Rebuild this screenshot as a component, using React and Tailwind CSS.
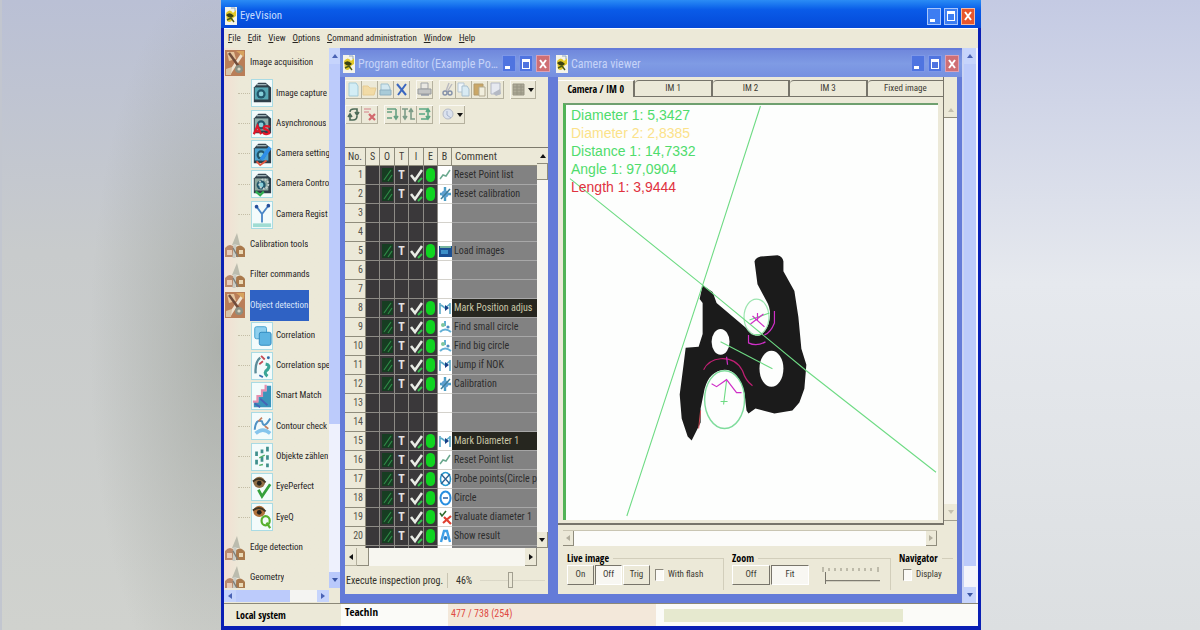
import React from "react";

const NARROW = "font-['Roboto_Condensed','Liberation_Sans',sans-serif]";
const NARROW_BOLD = "font-['Open_Sans_Condensed','Liberation_Sans',sans-serif] font-bold";

/* ---------- shared pieces ---------- */

function EyeLogo() {
  return (
    <svg viewBox="0 0 12 18" className="h-[18px] w-3 shrink-0" preserveAspectRatio="none" aria-hidden="true">
      <rect width="12" height="18" fill="#f4f4ea" />
      <path d="M1 6 Q5 1 8 6 L11 3 V9 L8 11 Q6 17 2 14 Z" fill="#e2c92a" />
      <path d="M1 8 Q5 4 9 9 Q5 13 1 8Z" fill="#3b4313" />
      <path d="M2 13 L6 11 L9 15" stroke="#4c5a18" strokeWidth="1.4" fill="none" />
      <path d="M6 1 L10 1 L10 4" stroke="#8fa7c4" fill="none" />
    </svg>
  );
}

function WindowButtons({ active }) {
  const blue = active ? "bg-[#3d7df2] border-[#a9c6fb]" : "bg-[#4f74e0] border-[#7d97e8]";
  const red = active ? "bg-[#e8562c] border-[#f3b8a0]" : "bg-[#cf6f74] border-[#dba0b4]";
  return (
    <div className="flex shrink-0 gap-[3px]">
      <button aria-label="Minimize" className={`flex h-[17px] w-[14px] items-end justify-start border p-[2px] ${blue}`}>
        <span className="h-[3px] w-[5px] bg-white" />
      </button>
      <button aria-label="Restore" className={`flex h-[17px] w-[14px] items-center justify-center border ${blue}`}>
        <span className="h-[10px] w-2 border border-t-[3px] border-white" />
      </button>
      <button aria-label="Close" className={`flex h-[17px] w-[14px] items-center justify-center border ${red}`}>
        <svg viewBox="0 0 8 10" className="h-[10px] w-2" aria-hidden="true">
          <path d="M1 1 L7 9 M7 1 L1 9" stroke="#fff" strokeWidth="2" />
        </svg>
      </button>
    </div>
  );
}

function Arrow({ dir, color = "#111" }) {
  const d = {
    up: "M0 5 L3 1 L6 5Z",
    down: "M0 1 L3 5 L6 1Z",
    left: "M5 0 L1 3 L5 6Z",
    right: "M1 0 L5 3 L1 6Z",
  }[dir];
  return (
    <svg viewBox="0 0 6 6" className="size-[6px]" aria-hidden="true">
      <path d={d} fill={color} />
    </svg>
  );
}

function ChildWindow({ title, className, children }) {
  return (
    <section className={`flex min-w-0 flex-col border-t-2 border-b-[9px] border-[#647bd8] ${className}`}>
      <header className="flex h-[27px] shrink-0 items-center gap-[3px] bg-linear-to-b from-[#7088dc] via-[#7f9be4] to-[#7690e0] pr-[3px] pl-[3px]">
        <EyeLogo />
        <h2 className={`min-w-0 flex-1 overflow-hidden text-[12px] text-ellipsis whitespace-nowrap text-[#c6d3f8] ${NARROW}`}>{title}</h2>
        <WindowButtons />
      </header>
      <div className="flex min-h-0 flex-1 flex-col border-x-[5px] border-[#647bd8] bg-[#ece9d8]">{children}</div>
    </section>
  );
}

/* ---------- command tree ---------- */

function ToolsIcon({ open }) {
  return (
    <svg viewBox="0 0 20 28" className="h-7 w-5 shrink-0" preserveAspectRatio="none" aria-hidden="true">
      {open ? (
        <>
          <rect x="0" y="1" width="20" height="26" fill="#b97e58" />
          <path d="M2 3 L9 3 L11 10 L4 12Z" fill="#e6c59d" />
          <path d="M18 4 L4 25" stroke="#efe3cf" strokeWidth="3" />
          <path d="M4 4 L17 22" stroke="#6f4c3b" strokeWidth="2.5" />
          <circle cx="14" cy="20" r="4" fill="#8c9183" />
          <circle cx="14" cy="20" r="1.6" fill="#d8d6c4" />
          <path d="M1 20 L7 18 L6 26 L1 26Z" fill="#d9c3a5" />
          <path d="M11 2 L19 2 L19 8Z" fill="#d7a35e" />
        </>
      ) : (
        <>
          <path d="M7 14 L12 2 L15 14Z" fill="#bcbcae" />
          <path d="M0 17 Q5 11 10 17 L10 26 L0 26Z" fill="#b98a6c" />
          <path d="M11 16 Q16 12 20 18 L20 26 L11 26Z" fill="#a9794c" />
          <rect x="2" y="19" width="5" height="5" fill="#e8cbb4" />
          <rect x="14" y="19" width="4" height="4" fill="#ead9b6" />
          <path d="M10 13 L9 27" stroke="#c9ccc5" strokeWidth="3" />
          <path d="M8 17 L13 26" stroke="#7e7f7a" strokeWidth="1.4" />
        </>
      )}
    </svg>
  );
}

function Camera({ tint }) {
  return (
    <>
      <path d="M2 8 L7 3 L15 3 L21 8 V24 H2Z" fill="#2e3f49" />
      <rect x="3" y="8" width="15" height="13" fill={tint} />
      <circle cx="10" cy="15" r="5" fill="#22566b" />
      <circle cx="10" cy="15" r="2.6" fill="#86cfda" />
      <path d="M5 5 H16" stroke="#9fb3b8" strokeWidth="1.5" />
    </>
  );
}

const LEAF_ART = {
  capture: <Camera tint="#56a7b4" />,
  async: (
    <>
      <Camera tint="#8fb0ad" />
      <path d="M2 25 L6 16 L10 25 M4 22 H9" stroke="#e0182a" strokeWidth="2.4" fill="none" />
      <path d="M20 17 Q12 15 13 19 Q20 21 19 24 Q14 26 12 23" stroke="#e0182a" strokeWidth="2.4" fill="none" />
    </>
  ),
  settings: (
    <>
      <Camera tint="#4fa4cf" />
      <path d="M20 7 L10 20" stroke="#2f8fe8" strokeWidth="4" />
      <path d="M5 22 L9 26 L16 21" stroke="#e4573f" strokeWidth="2" fill="none" />
    </>
  ),
  control: (
    <>
      <Camera tint="#8ca79f" />
      <circle cx="13" cy="14" r="5" fill="none" stroke="#c5cfd0" strokeWidth="2" strokeDasharray="2 1.4" />
      <path d="M4 22 L9 26 L13 22" stroke="#2fae53" strokeWidth="2.4" fill="none" />
    </>
  ),
  register: (
    <>
      <path d="M5 5 L11 13 L18 4 M11 13 V22" stroke="#4a86c7" strokeWidth="2" fill="none" />
      <circle cx="5" cy="5" r="2" fill="#25509b" />
      <circle cx="18" cy="4" r="2" fill="#25509b" />
      <rect x="1" y="23" width="20" height="4" fill="#9fdcd3" />
    </>
  ),
  correlation: (
    <>
      <rect x="3" y="4" width="13" height="13" rx="2" fill="#8fd0ee" stroke="#3f9fce" />
      <rect x="8" y="10" width="13" height="14" rx="2" fill="#5db4e2" stroke="#2e87bb" />
    </>
  ),
  special: (
    <>
      <path d="M4 22 Q3 10 9 5" stroke="#5b8d9a" strokeWidth="2.6" fill="none" />
      <path d="M10 3 L14 7 M8 12 L12 9" stroke="#c64b55" strokeWidth="2" />
      <path d="M15 12 Q21 13 17 18 Q12 21 17 25" stroke="#3aa596" strokeWidth="3.4" fill="none" />
      <circle cx="18" cy="5" r="1.6" fill="#2e6ca8" />
      <path d="M8 24 L12 26" stroke="#3a6fb0" strokeWidth="2" />
    </>
  ),
  smart: (
    <>
      <path d="M2 26 V20 H7 V14 H12 V9 H16 V3 H21 V26Z" fill="#3a94bb" />
      <path d="M1 20 H6 V14 H11 V8 H15 V2" stroke="#e58fb0" strokeWidth="2.4" fill="none" />
      <path d="M3 22 L9 26 M9 17 L17 24" stroke="#4564b5" strokeWidth="2" />
    </>
  ),
  contour: (
    <>
      <path d="M3 18 Q4 6 11 9 Q13 18 20 6" stroke="#4f93c5" strokeWidth="2.2" fill="none" />
      <path d="M4 22 Q12 15 20 22" stroke="#86c5ec" strokeWidth="4" fill="none" />
      <path d="M7 9 L11 5 M14 14 L18 17" stroke="#c28162" strokeWidth="1.8" />
    </>
  ),
  count: (
    <>
      <path d="M5 8 V13 M5 17 V22 M11 6 V10 M11 14 V19 M17 3 V8 M17 12 V17 M17 21 V25" stroke="#3f8f8c" strokeWidth="3" />
      <path d="M8 15 L14 12 M8 23 L12 22" stroke="#4fae67" strokeWidth="1.6" />
    </>
  ),
  perfect: (
    <>
      <ellipse cx="8" cy="9" rx="6.5" ry="6" fill="#8e6d45" />
      <path d="M1 8 Q8 2 15 9" stroke="#3e3626" strokeWidth="2" fill="none" />
      <circle cx="8" cy="10" r="2.6" fill="#24221e" />
      <path d="M7 17 L11 24 L20 11" stroke="#35a03b" strokeWidth="3" fill="none" />
    </>
  ),
  eyeq: (
    <>
      <ellipse cx="8" cy="8" rx="6.5" ry="6" fill="#b0713c" />
      <path d="M1 7 Q8 1 15 8" stroke="#3e3626" strokeWidth="2" fill="none" />
      <circle cx="8" cy="9" r="2.6" fill="#24221e" />
      <ellipse cx="15" cy="18" rx="4.5" ry="5" fill="none" stroke="#58b02e" strokeWidth="2.4" />
      <path d="M16 20 L20 26" stroke="#58b02e" strokeWidth="2.4" />
    </>
  ),
};

const TREE = [
  { label: "Image acquisition", group: true, open: true },
  { label: "Image capture", art: "capture" },
  { label: "Asynchronous", art: "async" },
  { label: "Camera setting", art: "settings" },
  { label: "Camera Contro", art: "control" },
  { label: "Camera Regist", art: "register" },
  { label: "Calibration tools", group: true },
  { label: "Filter commands", group: true },
  { label: "Object detection", group: true, open: true, selected: true },
  { label: "Correlation", art: "correlation" },
  { label: "Correlation spe", art: "special" },
  { label: "Smart Match", art: "smart" },
  { label: "Contour check", art: "contour" },
  { label: "Objekte zählen", art: "count" },
  { label: "EyePerfect", art: "perfect" },
  { label: "EyeQ", art: "eyeq" },
  { label: "Edge detection", group: true },
  { label: "Geometry", group: true },
];

function TreeItem({ item }) {
  if (item.group) {
    return (
      <li className="flex min-w-0 items-center gap-[5px]">
        <ToolsIcon open={item.open} />
        <button
          className={
            item.selected
              ? "h-full overflow-hidden bg-[#2f62c4] pr-px whitespace-nowrap text-[#dbe6fa]"
              : "overflow-hidden whitespace-nowrap"
          }
        >
          {item.label}
        </button>
      </li>
    );
  }
  return (
    <li className="flex min-w-0 items-center">
      <span className="ml-[13px] h-px w-3 shrink-0 border-t border-dotted border-[#c3bda6]" />
      <svg viewBox="0 0 22 28" className="mr-[3px] ml-px h-7 w-[22px] shrink-0 border border-[#a9dbe4] bg-[#f3fbfb]" preserveAspectRatio="none" aria-hidden="true">
        {LEAF_ART[item.art]}
      </svg>
      <button className="min-w-0 overflow-hidden whitespace-nowrap">{item.label}</button>
    </li>
  );
}

function Sidebar() {
  return (
    <nav aria-label="Commands" className="flex w-[116px] shrink-0 flex-col bg-[#ece9d8]">
      <div className="flex min-h-0 flex-1">
        <div className="flex min-w-0 flex-1 overflow-hidden bg-linear-to-r from-[#f2dfd2] via-[#ece9d8] via-15% to-[#ece9d8] pl-px">
          <ul className={`-mb-[5px] grid min-w-0 flex-1 auto-rows-fr text-[9px] text-[#26241f] ${NARROW}`}>
            {TREE.map((item) => (
              <TreeItem key={item.label} item={item} />
            ))}
          </ul>
        </div>
        <div className="flex w-[11px] shrink-0 flex-col items-center bg-[#eef1fd]">
          <button aria-label="Scroll up" className="flex h-4 w-full items-center justify-center bg-[#c6d4fc]">
            <Arrow dir="up" color="#4a63b5" />
          </button>
          <div className="w-full basis-[360px] bg-[#bccbfb]" />
          <div className="flex-1" />
          <button aria-label="Scroll down" className="flex h-4 w-full items-center justify-center bg-[#b9c9fb]">
            <Arrow dir="down" color="#3a55a5" />
          </button>
        </div>
      </div>
      <div className="flex h-[15px] shrink-0 items-center pr-[11px]">
        <button aria-label="Scroll left" className="flex h-3 w-3 items-center justify-center bg-[#c6d4fc]">
          <Arrow dir="left" color="#4a63b5" />
        </button>
        <div className="h-3 w-[54px] bg-[#bccbfb]" />
        <div className="h-3 flex-1 bg-[#f4f4f2]" />
        <button aria-label="Scroll right" className="flex h-3 w-3 items-center justify-center bg-[#c6d4fc]">
          <Arrow dir="right" color="#4a63b5" />
        </button>
      </div>
    </nav>
  );
}

/* ---------- program editor ---------- */

const TOOL_ART = {
  New: <path d="M3 2 H10 L12 5 V15 H3Z" fill="#d3edf5" stroke="#a3cbd8" />,
  Open: <path d="M1 5 H6 L8 7 H14 L12 14 H1Z" fill="#f2dba6" stroke="#e6cc94" />,
  Save: (
    <>
      <path d="M3 3 H10 L12 7 V10 H3Z" fill="#d3e8f0" stroke="#9fbfcd" />
      <path d="M2 9 H13 V14 H2Z" fill="#a9cbd8" stroke="#8fb1c2" />
    </>
  ),
  Delete: <path d="M3 3 L12 14 M12 3 L4 14" stroke="#3b67c0" strokeWidth="2" />,
  Print: (
    <>
      <path d="M4 2 H11 V8 H4Z" fill="#e9e8e2" stroke="#a0a3a6" />
      <path d="M1 8 H14 V13 H1Z" fill="#c3c4c4" stroke="#989b9d" />
      <path d="M4 14 H12" stroke="#6e7a93" />
    </>
  ),
  Cut: (
    <>
      <path d="M9 2 L6 10 M12 3 L7 11" stroke="#b9b9bf" strokeWidth="1.4" />
      <circle cx="5" cy="12" r="2" fill="none" stroke="#8490a9" strokeWidth="1.4" />
      <circle cx="10" cy="12" r="2" fill="none" stroke="#8490a9" strokeWidth="1.4" />
    </>
  ),
  Copy: (
    <>
      <path d="M2 2 H8 V11 H2Z" fill="#eef5fa" stroke="#b5c6d3" />
      <path d="M6 5 H11 L13 8 V15 H6Z" fill="#d8eaf3" stroke="#a9c0cf" />
    </>
  ),
  Paste: (
    <>
      <path d="M2 3 H11 V14 H2Z" fill="#caa767" stroke="#b39a6a" />
      <path d="M7 6 H13 V15 H7Z" fill="#f1eedd" stroke="#b3ab92" />
    </>
  ),
  Properties: (
    <>
      <path d="M3 2 H12 V13 H3Z" fill="#e6e9f0" stroke="#b3b8c5" />
      <path d="M5 12 L12 8 L13 13 L8 15Z" fill="#b4b9c4" />
    </>
  ),
  Columns: <path d="M2 3 H13 V14 H2Z M2 6 H13 M2 9 H13 M2 12 H13 M6 3 V14 M10 3 V14" fill="#aeab99" stroke="#979483" />,
  Restart: <path d="M4 6 Q4 3 8 3 H11 V8 M11 10 Q11 14 7 14 H4 V9 M9 6 L11 9 L13 6 M2 11 L4 8 L6 11" fill="none" stroke="#4d6b58" strokeWidth="1.6" />,
  Remove: (
    <>
      <path d="M2 3 H9 M2 6 H7" stroke="#dca3a3" strokeWidth="1.6" />
      <path d="M7 8 L13 14 M13 8 L7 14" stroke="#d2686d" strokeWidth="2.2" />
    </>
  ),
  Step: <path d="M2 3 H11 M2 6 H7 M2 12 H7 M11 3 V13 M9 10 L11 13 L13 10" fill="none" stroke="#66a183" strokeWidth="1.6" />,
  StepOver: <path d="M1 3 H7 M4 3 V13 M2 10 L4 13 L6 10 M8 6 L10 3 L12 6 M10 3 V13 H14" fill="none" stroke="#7c9c88" strokeWidth="1.6" />,
  StepOut: <path d="M2 3 H11 V13 H4 M2 8 H8 M9 6 L11 3 L13 6 M9 10 L11 13 L13 10" fill="none" stroke="#5aa884" strokeWidth="1.6" />,
  Search: (
    <>
      <circle cx="8" cy="8" r="5" fill="#dbe2ee" stroke="#b5bbc7" />
      <path d="M7 5 V9 L11 12" fill="none" stroke="#a5b2cc" />
    </>
  ),
};

function Tool({ name, menu }) {
  return (
    <button aria-label={name} className="flex h-[18px] items-center border-r border-b border-[#b5b19e]">
      <svg viewBox="0 0 15 17" className="h-[17px] w-[15px]" aria-hidden="true">
        {TOOL_ART[name]}
      </svg>
      {menu && (
        <span className="flex w-[9px] justify-center">
          <Arrow dir="down" />
        </span>
      )}
    </button>
  );
}

function ToolGroup({ names, menu }) {
  return (
    <div className="flex border-t border-l border-[#f9f8f2]">
      {names.map((n) => (
        <Tool key={n} name={n} menu={menu} />
      ))}
    </div>
  );
}

const BLOCK_ART = {
  points: <path d="M1 13 L4 9 L7 10 L11 4" stroke="#6aa88e" strokeWidth="1.5" fill="none" />,
  calibrate: (
    <>
      <path d="M6 2 V16 M1 9 H12" stroke="#4a9cc4" strokeWidth="2.4" />
      <circle cx="6" cy="9" r="3.5" fill="#5f9fd1" />
      <path d="M2 14 L11 4" stroke="#3f7f9a" strokeWidth="1.5" />
    </>
  ),
  load: (
    <>
      <rect x="0" y="4" width="13" height="11" fill="#1b4f93" />
      <path d="M1 5 H12" stroke="#78b5a0" strokeWidth="2" />
      <rect x="2" y="8" width="7" height="4" fill="#3c8fc8" />
    </>
  ),
  mark: (
    <>
      <path d="M1 4 V15 M11 4 V15 M2 6 L6 9 L11 5" stroke="#5aa9c8" strokeWidth="1.6" fill="none" />
      <path d="M6 6 L10 9 L6 12Z" fill="#173f86" />
    </>
  ),
  find: (
    <>
      <path d="M1 14 Q6 9 12 14 M6 3 V8" stroke="#63b0d6" strokeWidth="2" fill="none" />
      <circle cx="4" cy="7" r="2" fill="#7fc79d" />
      <circle cx="9" cy="9" r="1.6" fill="#4a8ac0" />
    </>
  ),
  probe: (
    <>
      <ellipse cx="6.5" cy="9" rx="5" ry="6.5" fill="none" stroke="#2c9ad0" strokeWidth="1.6" />
      <path d="M2 4 L11 14 M11 4 L2 14" stroke="#2f5f8f" strokeWidth="1.3" />
    </>
  ),
  circle: (
    <>
      <ellipse cx="6.5" cy="9" rx="5" ry="6.5" fill="#fff" stroke="#2a8fe0" strokeWidth="2" />
      <path d="M4 9 H9" stroke="#2a5fa0" strokeWidth="1.5" />
    </>
  ),
  evaluate: (
    <>
      <path d="M1 5 L3 8 L7 3" stroke="#2f6b2f" strokeWidth="1.6" fill="none" />
      <path d="M4 15 L12 8 M5 9 L12 16" stroke="#e04030" strokeWidth="2.2" />
    </>
  ),
  show: (
    <>
      <path d="M2 15 L5 4 H8 L11 15" stroke="#3f9fe6" strokeWidth="2.4" fill="none" />
      <circle cx="6.5" cy="11" r="2" fill="#2b7fc8" />
    </>
  ),
};

const ROWS = [
  ["Reset Point list", "points"],
  ["Reset calibration", "calibrate"],
  null,
  null,
  ["Load images", "load"],
  null,
  null,
  ["Mark Position adjus", "mark", true],
  ["Find small circle", "find"],
  ["Find big circle", "find"],
  ["Jump if NOK", "mark"],
  ["Calibration", "calibrate"],
  null,
  null,
  ["Mark Diameter 1", "mark", true],
  ["Reset Point list", "points"],
  ["Probe points(Circle p", "probe"],
  ["Circle", "circle"],
  ["Evaluate diameter 1", "evaluate"],
  ["Show result", "show"],
  null,
];

function Glyph({ children }) {
  return (
    <svg viewBox="0 0 13 18" className="mx-auto block h-[18px] w-[13px]" aria-hidden="true">
      {children}
    </svg>
  );
}

function ProgramTable() {
  const dark = "border-r border-b border-[#8d8b86] bg-[#3a383a] p-0";
  const head = "border-r border-b border-[#8f8c7c] p-0 font-normal";
  return (
    <table className={`w-full table-fixed border-separate border-spacing-0 text-[10px] leading-[14px] ${NARROW}`}>
      <colgroup>
        <col className="w-[21px]" />
        <col className="w-[14px]" />
        <col className="w-[15px]" />
        <col className="w-[14px]" />
        <col className="w-[15px]" />
        <col className="w-[14px]" />
        <col className="w-[14px]" />
        <col />
      </colgroup>
      <thead>
        <tr className="h-[18px] bg-[#ece9d8] text-[#3f3d36]">
          <th className={head}>No.</th>
          {["S", "O", "T", "I", "E", "B"].map((h) => (
            <th key={h} className={head}>
              {h}
            </th>
          ))}
          <th className="border-b border-[#8f8c7c] p-0 pl-[3px] text-left text-[11px] font-normal">Comment</th>
        </tr>
      </thead>
      <tbody>
        {ROWS.map((row, i) => (
          <tr key={i} className="h-[19px]">
            <td className="border-r border-b border-[#8f8c7c] bg-[#ece9d8] p-0 pr-[2px] text-right text-[#55534a]">{i < 20 && i + 1}</td>
            <td className={dark} />
            <td className={dark}>
              {row && (
                <Glyph>
                  <rect x="1" y="2" width="11" height="14" fill="#173d22" />
                  <path d="M3 14 L10 4 M7 15 L11 9" stroke="#2f8a47" strokeWidth="1.2" />
                </Glyph>
              )}
            </td>
            <td className={dark}>
              {row && <span className="block text-center text-[12px] font-bold text-[#e4e2e2]">T</span>}
            </td>
            <td className={dark}>
              {row && (
                <Glyph>
                  <path d="M1 9 L5 14 L12 4" stroke="#e9ece6" strokeWidth="2.6" fill="none" />
                  <path d="M8 16 L12 12" stroke="#35c04d" strokeWidth="1.8" />
                </Glyph>
              )}
            </td>
            <td className={dark}>
              {row && (
                <Glyph>
                  <rect x="2" y="2" width="9" height="14" rx="4.5" fill="#10d420" />
                </Glyph>
              )}
            </td>
            <td className="border-b border-[#d4d2cc] bg-white p-0">{row && <Glyph>{BLOCK_ART[row[1]]}</Glyph>}</td>
            <td
              className={
                row && row[2]
                  ? "overflow-hidden border-b border-[#a5a5a5] bg-[#26261f] p-0 pl-[2px] whitespace-nowrap text-[#c9c7a8]"
                  : "overflow-hidden border-b border-[#a8a8a8] bg-[#828282] p-0 pl-[2px] whitespace-nowrap text-[#2d2d2d]"
              }
            >
              {row && row[0]}
            </td>
          </tr>
        ))}
      </tbody>
    </table>
  );
}

function ProgramEditor() {
  return (
    <ChildWindow title="Program editor (Example Position adjustment)" className="w-[213px] shrink-0">
      <div className="flex h-[70px] shrink-0 flex-col gap-[6px] pt-[3px]">
        <div className="flex gap-[6px]">
          <ToolGroup names={["New", "Open", "Save", "Delete"]} />
          <ToolGroup names={["Print"]} />
          <ToolGroup names={["Cut", "Copy", "Paste", "Properties"]} />
          <ToolGroup names={["Columns"]} menu />
        </div>
        <div className="flex gap-[6px]">
          <ToolGroup names={["Restart", "Remove"]} />
          <ToolGroup names={["Step", "StepOver", "StepOut"]} />
          <ToolGroup names={["Search"]} menu />
        </div>
      </div>
      <div className="flex min-h-[398px] flex-1 basis-0 overflow-hidden border-t border-[#7d7a6c]">
        <div className="min-w-0 flex-1">
          <ProgramTable />
        </div>
        <div className="flex w-[11px] flex-col bg-[#f7f6f0]">
          <button aria-label="Scroll up" className="flex h-4 items-center justify-center border-b border-[#8f8c7c] bg-[#ece9d8]">
            <Arrow dir="up" />
          </button>
          <div className="h-4 border-r border-b border-[#8f8c7c] bg-[#ece9d8]" />
          <div className="flex-1" />
          <button aria-label="Scroll down" className="flex h-4 items-center justify-center border-r border-b border-[#8f8c7c] bg-[#ece9d8]">
            <Arrow dir="down" />
          </button>
        </div>
      </div>
      <div className="flex h-[18px] shrink-0 pr-[11px]">
        <button aria-label="Scroll left" className="flex w-3 items-center justify-center border-r border-b border-[#b5b19e]">
          <Arrow dir="left" />
        </button>
        <div className="w-3 border-r border-b border-[#8f8c7c]" />
        <div className="flex-1 bg-[#f7f6f0]" />
        <button aria-label="Scroll right" className="flex w-3 items-center justify-center border-r border-b border-[#8f8c7c]">
          <Arrow dir="right" />
        </button>
      </div>
      <div className={`flex h-7 shrink-0 items-center gap-2 pr-[3px] text-[10px] text-[#33312a] ${NARROW}`}>
        <span className="w-[103px] border-r border-[#c9c5b2] pl-px whitespace-nowrap">Execute inspection prog.</span>
        <span>46%</span>
        <input
          type="range"
          defaultValue="46"
          aria-label="Execution speed"
          className="h-4 min-w-0 flex-1 appearance-none bg-linear-to-b from-transparent from-47% via-[#9d9a8b] via-47% to-transparent to-55% [&::-webkit-slider-thumb]:h-[16px] [&::-webkit-slider-thumb]:w-[5px] [&::-webkit-slider-thumb]:appearance-none [&::-webkit-slider-thumb]:border [&::-webkit-slider-thumb]:border-[#a29f90] [&::-webkit-slider-thumb]:bg-[#ece9d8]"
        />
      </div>
    </ChildWindow>
  );
}

/* ---------- camera viewer ---------- */

const READINGS = [
  ["Diameter 1: 5,3427", "text-[#4fdc6c]"],
  ["Diameter 2: 2,8385", "text-[#fbe28a]"],
  ["Distance 1: 14,7332", "text-[#4fdc6c]"],
  ["Angle 1: 97,0904", "text-[#4fdc6c]"],
  ["Length 1: 3,9444", "text-[#e0323f]"],
];

function InspectionImage() {
  return (
    <svg viewBox="567 105 373 417" preserveAspectRatio="none" className="absolute inset-0 size-full" role="img" aria-label="Inspected part with measurements">
      <path
        d="M704 286 L714 293 L718 304 L750 331 Q762 345 770 325 Q774 312 768 302 L759 285 L756 262 Q758 257 766 257 L779 256 Q784 257 785 262 L785 272 L796 292 L800 318 L803 350 L808 366 L806 390 L801 404 L794 412 L776 415 L757 410 L750 415 L748 412 L746 395 Q740 371 726 371 Q711 372 706 390 L702 410 L702 424 L693 442 L689 438 L683 420 L681 396 L685 365 L687 349 L700 348 L704 335 L704 304 L701 300 Z"
        fill="#1b1b1b"
      />
      <ellipse cx="722" cy="343" rx="9" ry="13" fill="#fdfefd" />
      <ellipse cx="773" cy="370" rx="12" ry="18" fill="#fdfefd" />
      <ellipse cx="726" cy="401" rx="20" ry="29" fill="#fdfefd" stroke="#7fdc9c" strokeWidth="1.4" />
      <path d="M766 307 Q772 318 767 329 L759 335 L750 331" fill="#fdfefd" />
      <ellipse cx="758" cy="318" rx="12.5" ry="18" fill="none" stroke="#9ce5b0" strokeWidth="1.2" />
      <g fill="none" stroke="#6edb84" strokeWidth="1.1">
        <path d="M571 179 L704 286 L808 372 L938 474" />
        <path d="M762 106 L704 286 L628 518" />
        <path d="M722 343 L774 370" />
        <path d="M728 382 L725 406 M722 403 L729 403" />
        <path d="M751 321 L771 314 M757 336 H762" />
      </g>
      <g fill="none" stroke="#cf2fc7" strokeWidth="1.2">
        <path d="M705 371 Q710 361 722 360 Q737 359 744 372 Q747 382 754 387" stroke="#c01f73" />
        <path d="M713 385 L718 388 L728 381 L738 394 L743 394 M728 358 L729 366" />
        <path d="M750 336 V344 Q758 348 767 343 M776 312 V324 Q772 334 766 336" />
        <path d="M754 317 L766 328 M765 315 L752 325 M759 314 L759 322" />
      </g>
      <path d="M702 412 L700 430" stroke="#d04a55" strokeWidth="1" fill="none" />
    </svg>
  );
}

function Push({ children, pressed, wide }) {
  return (
    <button
      aria-pressed={!!pressed}
      className={`h-5 border ${wide ? "w-[38px]" : "w-[27px]"} ${
        pressed ? "border-t-[#77746a] border-r-white border-b-white border-l-[#77746a] bg-[#f8f7f2]" : "border-t-white border-r-[#77746a] border-b-[#77746a] border-l-white"
      }`}
    >
      {children}
    </button>
  );
}

function Group({ title, className, children }) {
  return (
    <fieldset className={`min-w-0 border-t border-r border-[#d2cebb] ${className}`}>
      <legend className={`pr-1 text-[10px] leading-[12px] text-black ${NARROW_BOLD}`}>{title}</legend>
      <div className="flex items-center gap-px pt-px">{children}</div>
    </fieldset>
  );
}

function Check({ id, label }) {
  return (
    <div className="flex items-center gap-1 pl-1">
      <input
        id={id}
        type="checkbox"
        className="h-3 w-[9px] appearance-none border border-t-[#8b887b] border-r-white border-b-white border-l-[#8b887b] bg-[#fbfaf6] checked:bg-[#3b67c0]"
      />
      <label htmlFor={id} className="whitespace-nowrap">
        {label}
      </label>
    </div>
  );
}

function CameraViewer() {
  const tabs = ["IM 1", "IM 2", "IM 3", "Fixed image"];
  return (
    <ChildWindow title="Camera viewer" className="flex-1">
      <div className="flex min-h-0 flex-1">
        <div className="flex min-w-0 flex-1 flex-col border-r border-b-2 border-[#77746a] pt-[3px]">
          <div role="tablist" className={`flex h-[17px] shrink-0 text-[9px] text-[#3c3a33] ${NARROW}`}>
            <button role="tab" aria-selected="true" className={`flex-1 border-t border-r-2 border-t-white border-r-[#77746a] text-[10px] leading-[12px] text-black ${NARROW_BOLD}`}>
              Camera / IM 0
            </button>
            {tabs.map((t) => (
              <button key={t} role="tab" aria-selected="false" className="flex-1 rounded-tl border-t border-r-2 border-b border-t-[#77746a] border-r-[#77746a] border-b-[#77746a] last:border-r-0">
                {t}
              </button>
            ))}
          </div>
          <div className="flex min-h-0 flex-1 pt-[6px] pr-[5px] pb-[3px] pl-[5px]">
            <div className="relative flex-1 border-t-2 border-l-[3px] border-t-[#6fa06f] border-l-[#52b357] bg-[#fdfefd]">
              <InspectionImage />
              <div className="relative flex flex-col pt-px pl-[5px] font-['Liberation_Sans',sans-serif] text-[14px] leading-[18px]">
                {READINGS.map(([text, color]) => (
                  <p key={text} className={color}>
                    {text}
                  </p>
                ))}
              </div>
            </div>
          </div>
        </div>
        <div className="mb-1 flex w-[13px] shrink-0 flex-col border-b border-[#a29f90] bg-[#f7f6f0]">
          <button aria-label="Scroll up" className="flex h-[41px] items-end justify-center border-b border-[#8f8c7c] bg-[#ece9d8] pb-1">
            <Arrow dir="up" color="#c3bfae" />
          </button>
          <div className="flex-1" />
          <button aria-label="Scroll down" className="flex h-4 items-center justify-center bg-[#ece9d8]">
            <Arrow dir="down" color="#c3bfae" />
          </button>
        </div>
      </div>
      <div className="mt-[5px] mr-5 ml-[5px] flex h-4 shrink-0 border-t border-[#c9c5b2]">
        <button aria-label="Scroll left" className="flex w-[11px] items-center justify-center border-r border-b border-[#8f8c7c]">
          <Arrow dir="left" color="#b3af9e" />
        </button>
        <div className="flex-1 bg-[#fcfcfa]" />
        <button aria-label="Scroll right" className="flex w-[11px] items-center justify-center border-r border-b border-[#8f8c7c]">
          <Arrow dir="right" color="#b3af9e" />
        </button>
      </div>
      <div className={`flex h-[48px] shrink-0 gap-2 pt-[6px] pr-1 pb-1 pl-[9px] text-[9px] text-[#3c3a33] ${NARROW}`}>
        <Group title="Live image" className="w-[157px]">
          <Push>On</Push>
          <Push pressed>Off</Push>
          <Push>Trig</Push>
          <Check id="flash" label="With flash" />
        </Group>
        <Group title="Zoom" className="flex-1">
          <Push wide>Off</Push>
          <Push wide pressed>
            Fit
          </Push>
          <div className="ml-3 flex w-[58px] flex-col">
            <svg viewBox="0 0 58 5" className="h-[5px] w-full" aria-hidden="true">
              <path d="M1 0V5M7 1V4M13 1V4M19 1V4M25 1V4M31 1V4M37 1V4M43 1V4M49 1V4M56 0V5" stroke="#8f8c7c" />
            </svg>
            <input
              type="range"
              defaultValue="0"
              aria-label="Zoom factor"
              className="h-3 w-full appearance-none bg-linear-to-b from-transparent from-70% via-[#77746a] via-70% to-transparent to-82% [&::-webkit-slider-thumb]:h-3 [&::-webkit-slider-thumb]:w-1 [&::-webkit-slider-thumb]:appearance-none [&::-webkit-slider-thumb]:border-r [&::-webkit-slider-thumb]:border-[#77746a] [&::-webkit-slider-thumb]:bg-[#ece9d8]"
            />
          </div>
        </Group>
        <Group title="Navigator" className="w-[54px] border-r-0">
          <div className="flex h-5 items-center">
            <Check id="display" label="Display" />
          </div>
        </Group>
      </div>
    </ChildWindow>
  );
}

/* ---------- application frame ---------- */

const MENU = ["File", "Edit", "View", "Options", "Command administration", "Window", "Help"];

export default function App() {
  return (
    <div className="flex min-h-screen bg-[#c2c6cf] pl-0.5">
      <div className="min-w-0 flex-1 bg-linear-to-b from-[#bac0d5] via-[#c8cbcc] via-40% to-[#d0d2ce]">
        <div className="h-full bg-radial-[60%_60%_at_100%_55%] from-[#8f948b]/50 to-transparent" />
      </div>
      <div className="flex min-h-screen w-full max-w-[760px] flex-col border-x-[3px] border-b-4 border-[#0a1fb4] bg-[#ece9d8]">
        <header className="-mx-[3px] flex h-7 shrink-0 items-center gap-[3px] bg-linear-to-b from-[#2b8cf5] via-[#0a5be8] via-35% to-[#0549d8] pt-1 pr-[6px] pl-1">
          <EyeLogo />
          <h1 className={`flex-1 text-[11px] text-[#c5dcff] ${NARROW}`}>EyeVision</h1>
          <WindowButtons active />
        </header>
        <nav aria-label="Menu" className={`flex h-5 shrink-0 items-center gap-[7px] border-t border-white pl-1 text-[9px] text-[#26241f] ${NARROW}`}>
          {MENU.map((m) => (
            <button key={m}>
              <u>{m[0]}</u>
              {m.slice(1)}
            </button>
          ))}
        </nav>
        <main className="flex min-h-0 flex-1">
          <Sidebar />
          <ProgramEditor />
          <CameraViewer />
          <div className="flex w-4 shrink-0 flex-col items-center border-l-2 border-[#c9d3f4] bg-[#f4f5fb] pr-[2px]">
            <button aria-label="Scroll up" className="flex h-4 w-full items-center justify-center bg-[#c6d4fc]">
              <Arrow dir="up" color="#4a63b5" />
            </button>
            <div className="w-full basis-[502px] bg-[#bccbfb]" />
            <div className="flex-1" />
            <button aria-label="Scroll down" className="flex h-4 w-full items-center justify-center bg-[#c6d4fc]">
              <Arrow dir="down" color="#3a55a5" />
            </button>
          </div>
        </main>
        <footer className="flex h-[23px] shrink-0 items-center border-t border-[#8b8878] bg-[#fbfbf8] text-[10px]">
          <span className={`flex h-full w-[117px] items-center bg-[#ece9d8] pl-3 text-black ${NARROW_BOLD}`}>Local system</span>
          <span className={`w-[107px] self-start pl-1 text-[11px] text-black ${NARROW_BOLD}`}>TeachIn</span>
          <span className={`h-full w-[208px] bg-[#f3e8da] pt-[2px] pl-[3px] text-[#e04a42] ${NARROW}`}>477 / 738 (254)</span>
          <span className="ml-2 h-[13px] w-[239px] bg-[#e6e9cf]" />
        </footer>
      </div>
      <div className="min-w-0 flex-1 bg-linear-to-b from-[#c4cae3] via-[#e6e9ee] via-45% to-[#dcdfe1]" />
    </div>
  );
}
